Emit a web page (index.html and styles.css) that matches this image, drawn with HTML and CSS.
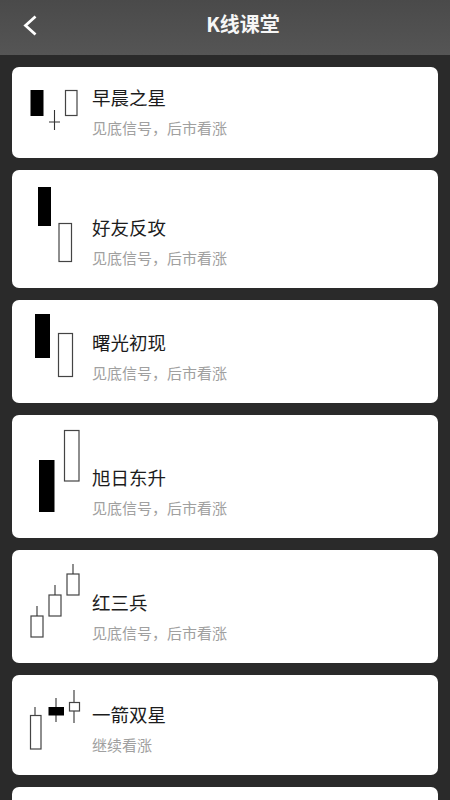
FILE: index.html
```html
<!DOCTYPE html>
<html lang="zh">
<head>
<meta charset="utf-8">
<title>K线课堂</title>
<link rel="stylesheet" href="styles.css">
</head>
<body>
<header class="bar">
  <svg class="back" width="20" height="24" viewBox="0 0 20 24"><path d="M15.5 3.5 L5.5 12.5 L15.5 21.5" fill="none" stroke="#fff" stroke-width="2.8"/></svg>
  <h1 class="bar-title">K线课堂</h1>
</header>
<main class="list">
  <section class="card h1">
    <svg class="chart" width="80" height="91" viewBox="0 0 80 91">
      <rect class="solid" x="18.500" y="23" width="13" height="26"/>
      <rect class="hollow" x="53.500" y="23.500" width="11.500" height="25"/>
      <path class="wick" d="M42.500 43V63M37 55H48"/>
    </svg>
    <div class="text"><h2 class="name">早晨之星</h2><p class="note">见底信号，后市看涨</p></div>
  </section>
  <section class="card h2">
    <svg class="chart" width="80" height="118" viewBox="0 0 80 118">
      <rect class="solid" x="26" y="17" width="13" height="39"/>
      <rect class="hollow" x="47" y="53.500" width="12.500" height="38"/>
    </svg>
    <div class="text"><h2 class="name">好友反攻</h2><p class="note">见底信号，后市看涨</p></div>
  </section>
  <section class="card h3">
    <svg class="chart" width="80" height="103" viewBox="0 0 80 103">
      <rect class="solid" x="23" y="14" width="15" height="44"/>
      <rect class="hollow" x="46.500" y="33.500" width="14" height="43"/>
    </svg>
    <div class="text"><h2 class="name">曙光初现</h2><p class="note">见底信号，后市看涨</p></div>
  </section>
  <section class="card h4">
    <svg class="chart" width="80" height="123" viewBox="0 0 80 123">
      <rect class="solid" x="27" y="45" width="15.500" height="52"/>
      <rect class="hollow" x="52.500" y="15.500" width="14.500" height="50.500"/>
    </svg>
    <div class="text"><h2 class="name">旭日东升</h2><p class="note">见底信号，后市看涨</p></div>
  </section>
  <section class="card h5">
    <svg class="chart" width="80" height="113" viewBox="0 0 80 113">
      <rect class="hollow" x="19" y="66" width="12" height="21"/>
      <rect class="hollow" x="37" y="45" width="12" height="21"/>
      <rect class="hollow" x="55" y="24" width="12" height="21"/>
      <path class="wick" d="M25 56V66M43 35V45M61 14V24"/>
    </svg>
    <div class="text"><h2 class="name">红三兵</h2><p class="note">见底信号，后市看涨</p></div>
  </section>
  <section class="card h6">
    <svg class="chart" width="80" height="100" viewBox="0 0 80 100">
      <path class="wick" d="M23 32V41M44 23V47M62 15V48"/>
      <rect class="hollow" x="18.500" y="40.500" width="10.500" height="33.500"/>
      <rect class="solid" x="36.500" y="32" width="15.500" height="8.500"/>
      <rect class="hollow" x="57.500" y="27.500" width="10" height="8.500"/>
    </svg>
    <div class="text"><h2 class="name">一箭双星</h2><p class="note">继续看涨</p></div>
  </section>
  <section class="card h7"></section>
</main>
</body>
</html>
```
FILE: styles.css
```css
* { box-sizing: border-box; }
html, body { margin: 0; height: 800px; overflow: hidden; }
body {
  background: #2a2a2a;
  font-family: "Noto Sans CJK SC", "Liberation Sans", sans-serif;
  display: flex;
  flex-direction: column;
}
.bar {
  height: 55px;
  flex: none;
  background: linear-gradient(#4a4a4a, #555555);
  display: flex;
  align-items: center;
  justify-content: center;
  padding: 0 0 7px 36px;
  position: relative;
}
.back { position: absolute; left: 20px; top: 13px; }
.bar-title {
  margin: 0;
  font-size: 20px;
  font-weight: 700;
  color: #f6f6f6;
  line-height: 26px;
}
.list {
  flex: 1;
  min-height: 0;
  overflow: hidden;
  display: flex;
  flex-direction: column;
  gap: 12px;
  padding: 12px 12px 0;
}
.card {
  background: #fff;
  border-radius: 7px;
  display: flex;
  align-items: flex-end;
  flex: none;
}
.h1 { height: 91px; }
.h2 { height: 118px; }
.h3 { height: 103px; }
.h4 { height: 123px; }
.h5 { height: 113px; }
.h6 { height: 100px; }
.h7 { height: 100px; }
.chart { display: block; flex: none; }
.text { padding-bottom: 19px; }
.name {
  margin: 0 0 8px;
  font-size: 18.500px;
  font-weight: 400;
  line-height: 24px;
  color: #1c1c1c;
}
.note {
  margin: 0;
  font-size: 15px;
  line-height: 22px;
  color: #a0a0a0;
}
.solid { fill: #000; }
.hollow { fill: #fff; stroke: #444; stroke-width: 1.2; }
.wick { fill: none; stroke: #333; stroke-width: 1.1; }
```
